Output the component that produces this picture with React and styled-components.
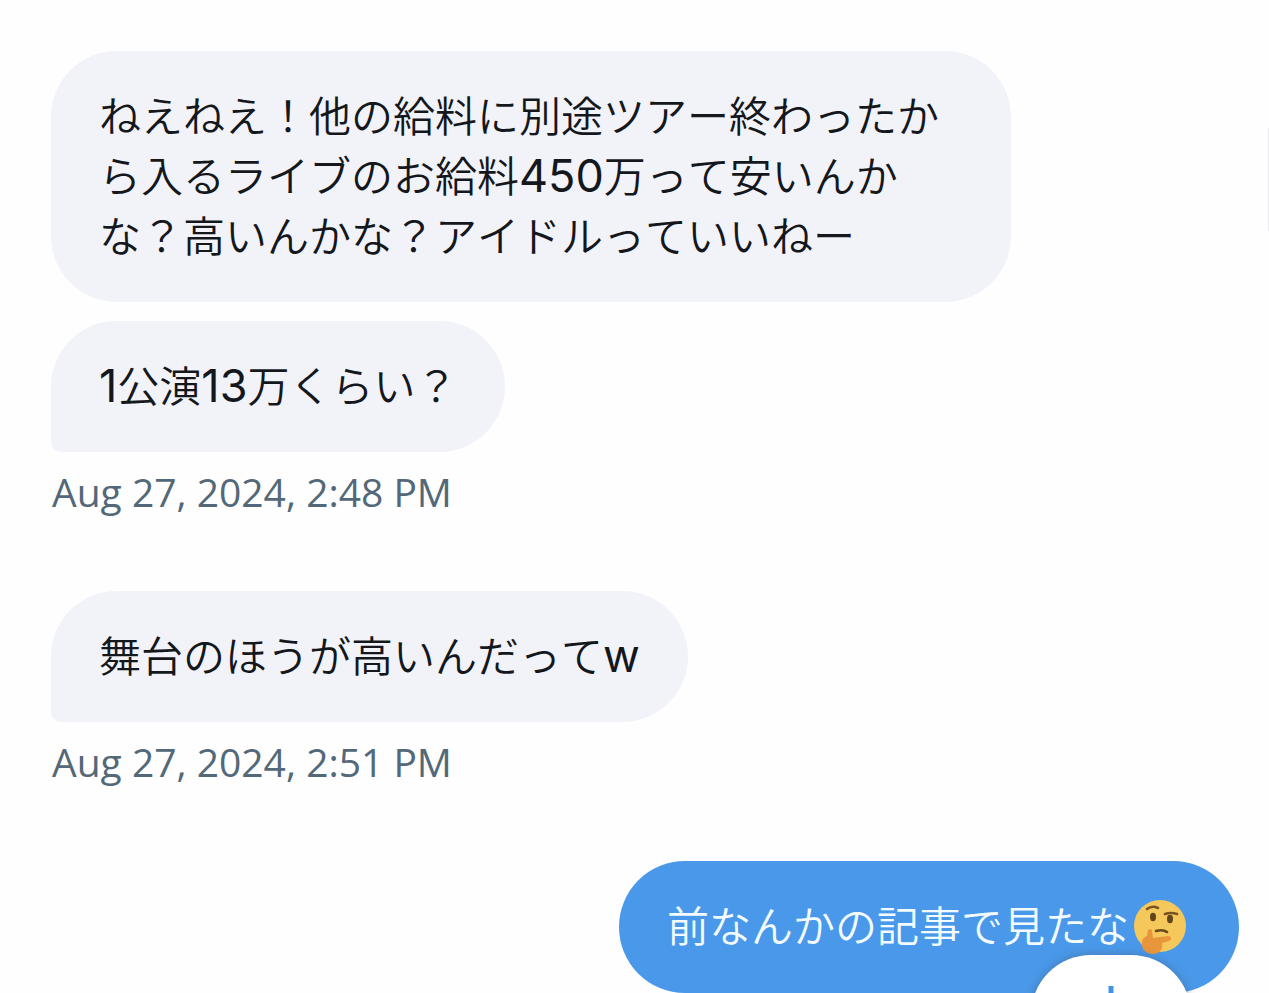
import React from 'react';
import styled, { createGlobalStyle } from 'styled-components';

const GlobalStyle = createGlobalStyle`
  * {
    box-sizing: border-box;
  }

  body {
    margin: 0;
    background: #fefefe;
    font-family: "Noto Sans CJK JP", sans-serif;
    font-kerning: none;
    overflow: hidden;
  }
`;

const Conversation = styled.main`
  display: flex;
  flex-direction: column;
  padding: 51px 30px 0 51px;
`;

const Group = styled.section`
  display: flex;
  flex-direction: column;
  align-items: ${props => (props.$own ? 'flex-end' : 'flex-start')};
  gap: 19px;
`;

const Bubble = styled.p`
  margin: 0;
  max-width: min(960px, 100%);
  padding: 33px 48px 38px;
  border-radius: ${props => (props.$tail ? '66px 66px 66px 10px' : '66px')};
  background: ${props => (props.$own ? '#4a98e9' : '#f2f3f8')};
  color: ${props => (props.$own ? '#f2fbff' : '#14171c')};
  font-size: 42px;
  font-weight: 350;
  line-height: 60px;
`;

const Latin = styled.span`
  font-family: Inter, sans-serif;
  font-size: 45px;
  font-weight: 400;
  line-height: 1;
`;

const Time = styled.time`
  display: block;
  margin: -9px 0 69px;
  padding-left: 1px;
  color: #536878;
  font-family: "Open Sans", sans-serif;
  font-size: 39px;
  font-kerning: normal;
  line-height: 60px;
`;

const Emoji = styled.svg`
  width: 54px;
  height: 56px;
  margin: 0 4px;
  vertical-align: -13px;
`;

const ScrollButton = styled.button`
  position: fixed;
  right: 78px;
  bottom: -94px;
  display: flex;
  justify-content: center;
  width: 160px;
  height: 132px;
  padding: 30px 0 0;
  border: none;
  border-radius: 60px;
  background: #fff;
  box-shadow: 0 0 8px rgba(60, 70, 90, 0.4);
  color: #3f93ea;
  cursor: pointer;
`;

const ScrollThumb = styled.div`
  position: fixed;
  top: 128px;
  right: 0;
  width: 1px;
  height: 103px;
  background: #e9e9eb;
`;

const groups = [
  {
    id: 1,
    messages: [
      'ねえねえ！他の給料に別途ツアー終わったから入るライブのお給料450万って安いんかな？高いんかな？アイドルっていいねー',
      '1公演13万くらい？',
    ],
    time: 'Aug 27, 2024, 2:48 PM',
    dateTime: '2024-08-27T14:48',
  },
  {
    id: 2,
    messages: ['舞台のほうが高いんだってw'],
    time: 'Aug 27, 2024, 2:51 PM',
    dateTime: '2024-08-27T14:51',
  },
  { id: 3, own: true, thinking: true, messages: ['前なんかの記事で見たな'] },
];

// latin runs use their own face, slightly larger than the kana around them
const renderText = (text) =>
  text.split(/([0-9a-z]+)/).map((part, i) =>
    i % 2 ? <Latin key={i}>{part}</Latin> : part
  );

function ThinkingFace() {
  return (
    <Emoji viewBox="0 0 54 56" role="img" aria-label="thinking face">
      <circle cx="27" cy="27" r="26" fill="#f5c85c" />
      <ellipse cx="20" cy="18" rx="3" ry="4.2" fill="#62451b" />
      <ellipse cx="37" cy="20" rx="3" ry="4.2" fill="#62451b" />
      <path d="M14 10q5-4 11-1M32 15q6-2 12 0" fill="none" stroke="#7a5420" strokeWidth="2.6" strokeLinecap="round" />
      <path d="M23 32q7-2 11 1" fill="none" stroke="#6b491c" strokeWidth="2.6" strokeLinecap="round" />
      <path d="M15 31c1-2 4-1 4 1l1 7 15-2c4 0 4 4 1 5l-7 2c1 6-2 11-9 11-8 0-12-6-11-12 0-3 2-5 5-6z" fill="#e8963c" />
    </Emoji>
  );
}

function App() {
  return (
    <>
      <GlobalStyle />
      <Conversation>
        {groups.map(group => (
          <Group key={group.id} $own={group.own}>
            {group.messages.map((text, i) => (
              <Bubble
                key={text}
                $own={group.own}
                $tail={!group.own && i === group.messages.length - 1}
              >
                {renderText(text)}
                {group.thinking && <ThinkingFace />}
              </Bubble>
            ))}
            {group.time && <Time dateTime={group.dateTime}>{group.time}</Time>}
          </Group>
        ))}
      </Conversation>
      <ScrollThumb />
      <ScrollButton aria-label="Scroll to latest">
        <svg width="48" height="54" viewBox="0 0 48 54" fill="none" stroke="currentColor" strokeWidth="5">
          <path d="M24 1v48M5 30l19 19 19-19" />
        </svg>
      </ScrollButton>
    </>
  );
}

export default App;
